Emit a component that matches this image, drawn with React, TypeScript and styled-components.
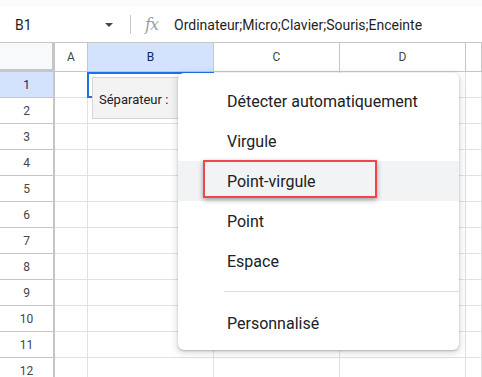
import React from 'react';
import styled, { createGlobalStyle } from 'styled-components';

const GlobalStyle = createGlobalStyle`
  html, body {
    margin: 0;
    padding: 0;
    background: #ffffff;
    font-family: Roboto, 'Liberation Sans', Arial, sans-serif;
    overflow: hidden;
  }
`;

const Page = styled.div`
  position: relative;
  width: 482px;
  height: 377px;
  overflow: hidden;
  background: #fff;
`;

//Formula bar -----------------------------------
const TopStrip = styled.div`
  height: 7px;
  background: #f9fbfd;
`;

const FormulaBar = styled.div`
  height: 35px;
  display: flex;
  align-items: center;
  border-bottom: 1px solid #c7c7c7;
  background: #fff;
`;

const NameBox = styled.div`
  width: 131px;
  box-sizing: border-box;
  padding: 0 15px;
  display: flex;
  align-items: center;
  justify-content: space-between;
  font-size: 14px;
  color: #1f1f1f;
  border-right: 1px solid #c7c7c7;
  height: 19px;
`;

const Caret = styled.span`
  width: 0;
  height: 0;
  margin-right: 2px;
  border-left: 4px solid transparent;
  border-right: 4px solid transparent;
  border-top: 4px solid #444746;
`;

const Fx = styled.span`
  margin-left: 14px;
  width: 18px;
  font-family: 'DejaVu Serif', 'Liberation Serif', serif;
  font-style: italic;
  font-size: 16px;
  color: #9aa0a6;
  letter-spacing: -1px;
`;

const FormulaText = styled.span`
  margin-left: 11px;
  font-size: 14px;
  color: #1f1f1f;
  white-space: nowrap;
`;
//-----------------------------------------------

//Sheet grid ------------------------------------
const Sheet = styled.div`
  display: grid;
  grid-template-columns: 55px 33px 126px 126px 126px 1fr;
  grid-template-rows: 29px repeat(12, 26px);
`;

const Corner = styled.div`
  background: #f8f9fa;
  border-right: 3px solid #c4c7c5;
  border-bottom: 3px solid #c4c7c5;
  box-sizing: border-box;
`;

const ColHead = styled.div<{ $active?: boolean }>`
  box-sizing: border-box;
  display: flex;
  align-items: center;
  justify-content: center;
  font-size: 12px;
  color: ${(p) => (p.$active ? '#0b2a5e' : '#444746')};
  background: ${(p) => (p.$active ? '#d3e3fd' : '#ffffff')};
  border-right: 1px solid #c4c7c5;
  border-bottom: 1px solid #c4c7c5;
`;

const RowHead = styled.div<{ $active?: boolean }>`
  box-sizing: border-box;
  display: flex;
  align-items: center;
  justify-content: center;
  font-size: 12px;
  color: ${(p) => (p.$active ? '#0b2a5e' : '#444746')};
  background: ${(p) => (p.$active ? '#d3e3fd' : '#ffffff')};
  border-right: 2px solid #c4c7c5;
  border-bottom: 1px solid #c4c7c5;
`;

const Cell = styled.div`
  box-sizing: border-box;
  border-right: 1px solid #e1e1e1;
  border-bottom: 1px solid #e1e1e1;
`;
//-----------------------------------------------

//Overlays --------------------------------------
const Selection = styled.div`
  position: absolute;
  left: 87px;
  top: 72px;
  width: 127px;
  height: 26px;
  box-sizing: border-box;
  border: 2px solid #1a73e8;
`;

const PasteBox = styled.div`
  position: absolute;
  left: 92px;
  top: 77px;
  width: 120px;
  height: 42px;
  box-sizing: border-box;
  padding: 2px 0 0 6px;
  display: flex;
  align-items: center;
  background: #f3f3f3;
  border: 1px solid #d6d6d6;
  font-size: 13px;
  color: #202124;
`;

const Menu = styled.div`
  position: absolute;
  left: 178px;
  top: 73px;
  width: 281px;
  padding: 8px 0 7px;
  background: #fff;
  border-radius: 6px;
  box-shadow: 0 2px 6px 2px rgba(60, 64, 67, 0.15), 0 1px 2px rgba(60, 64, 67, 0.3);
`;

const Item = styled.div<{ $hover?: boolean }>`
  height: 40px;
  padding-left: 49px;
  display: flex;
  align-items: center;
  font-size: 16px;
  color: #202124;
  background: ${(p) => (p.$hover ? '#f1f3f4' : 'transparent')};
`;

const Divider = styled.div`
  height: 1px;
  margin: 10px 0 11px 46px;
  background: #dadce0;
`;

const Highlight = styled.div`
  position: absolute;
  left: 25px;
  top: 87px;
  width: 174px;
  height: 38px;
  box-sizing: border-box;
  border: 2px solid #f0454b;
  box-shadow: 0 2px 5px rgba(0, 0, 0, 0.35);
`;
//-----------------------------------------------

const columns = ['A', 'B', 'C', 'D', ''];
const rows = Array.from({ length: 12 }, (_, i) => i + 1);
const options = ['Détecter automatiquement', 'Virgule', 'Point-virgule', 'Point', 'Espace'];

const App = (): JSX.Element => {
  return (
    <Page>
      <GlobalStyle />
      <TopStrip />
      <FormulaBar>
        <NameBox>
          <span>B1</span>
          <Caret />
        </NameBox>
        <Fx>fx</Fx>
        <FormulaText>Ordinateur;Micro;Clavier;Souris;Enceinte</FormulaText>
      </FormulaBar>

      <Sheet>
        <Corner />
        {columns.map((c, i) => (
          <ColHead key={i} $active={c === 'B'}>{c}</ColHead>
        ))}
        {rows.map((r) => (
          <React.Fragment key={r}>
            <RowHead $active={r === 1}>{r}</RowHead>
            {columns.map((c, i) => (
              <Cell key={i} />
            ))}
          </React.Fragment>
        ))}
      </Sheet>

      <Selection />
      <PasteBox>Séparateur :</PasteBox>

      <Menu>
        {options.map((o) => (
          <Item key={o} $hover={o === 'Point-virgule'}>{o}</Item>
        ))}
        <Divider />
        <Item>Personnalisé</Item>
        <Highlight />
      </Menu>
    </Page>
  );
};

export default App;
